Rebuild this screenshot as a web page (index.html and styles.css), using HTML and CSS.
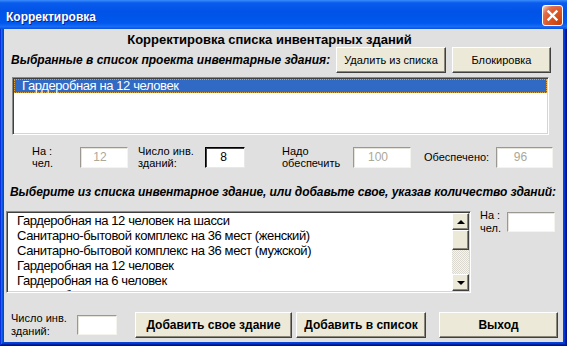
FILE: index.html
```html
<!DOCTYPE html>
<html lang="ru">
<head>
    <meta charset="UTF-8">
    <meta name="viewport" content="width=device-width, initial-scale=1.0">
    <title>Корректировка</title>
    <link rel="stylesheet" href="styles.css">
</head>
<body>
    <div class="window">
        <div class="titlebar">
            <span class="title">Корректировка</span>
            <span class="close">
                <svg width="19" height="19" viewBox="0 0 19 19">
                    <path d="M5.5 5.5 L13.5 13.5 M13.5 5.5 L5.5 13.5" stroke="#fff" stroke-width="2.4" stroke-linecap="square" fill="none"/>
                </svg>
            </span>
        </div>

        <div class="client">
            <div class="caption">Корректировка списка инвентарных зданий</div>

            <div class="row-top">
                <div class="hint">Выбранные в список проекта инвентарные здания:</div>
                <button class="btn btn-del">Удалить из списка</button>
                <button class="btn btn-lock">Блокировка</button>
            </div>

            <div class="listbox list-selected">
                <div class="item selected">Гардеробная на 12 человек</div>
            </div>

            <div class="totals">
                <div class="lbl lbl-people">На :<br>чел.</div>
                <div class="field disabled f-people">12</div>
                <div class="lbl lbl-count">Число инв.<br>зданий:</div>
                <div class="field active f-count">8</div>
                <div class="lbl lbl-need">Надо<br>обеспечить</div>
                <div class="field disabled f-need">100</div>
                <div class="lbl lbl-done">Обеспечено:</div>
                <div class="field disabled f-done">96</div>
            </div>

            <div class="hint hint-pick">Выберите из списка инвентарное здание, или добавьте свое, указав количество зданий:</div>

            <div class="row-pick">
                <div class="listbox list-catalog">
                    <div class="items">
                        <div class="item">Гардеробная на 12 человек на шасси</div>
                        <div class="item">Санитарно-бытовой комплекс на 36 мест (женский)</div>
                        <div class="item">Санитарно-бытовой комплекс на 36 мест (мужской)</div>
                        <div class="item">Гардеробная на 12 человек</div>
                        <div class="item">Гардеробная на 6 человек</div>
                        <div class="item">Гардеробная на 6 человек на шасси</div>
                    </div>
                    <div class="scrollbar">
                        <div class="sb-btn"><span class="arrow-up"></span></div>
                        <div class="sb-thumb"></div>
                        <div class="sb-track"></div>
                        <div class="sb-btn"><span class="arrow-down"></span></div>
                    </div>
                </div>
                <div class="side">
                    <div class="lbl lbl-side">На :<br>чел.</div>
                    <div class="field f-side"></div>
                </div>
            </div>

            <div class="row-bottom">
                <div class="lbl lbl-new">Число инв.<br>зданий:</div>
                <div class="field f-new"></div>
                <button class="btn bold btn-own">Добавить свое здание</button>
                <button class="btn bold btn-add">Добавить в список</button>
                <button class="btn bold btn-exit">Выход</button>
            </div>
        </div>
    </div>
</body>
</html>
```

FILE: styles.css
```css
body {
    margin: 0;
    background: #fff;
    font-family: "Liberation Sans", Arial, sans-serif;
    color: #000;
}
.window {
    width: 567px;
    height: 346px;
    box-sizing: border-box;
    display: flex;
    flex-direction: column;
    background: #0842d6;
    box-shadow: inset -1px -1px #00138c, inset 1px 1px #0831d9,
                inset -2px -2px #001ea0, inset 2px 2px #166aee,
                inset -3px -3px #003bda, inset 3px 3px #0855dd;
}
.titlebar {
    height: 29px;
    flex: none;
    box-sizing: border-box;
    display: flex;
    align-items: flex-start;
    padding: 5px 4px 0 6px;
    background: linear-gradient(#3a8cfa 0%, #0a5cee 10%, #0053e6 40%, #0058ee 80%, #1a6cf5 92%, #0a50dc 100%);
}
.title {
    margin-top: 5px;
    font-size: 12px;
    line-height: 14px;
    font-weight: bold;
    color: #fff;
    text-shadow: 1px 1px #0f1f8c;
}
.close {
    margin-left: auto;
    width: 21px;
    height: 21px;
    box-sizing: border-box;
    border: 1px solid #fff;
    border-radius: 3px;
    background: radial-gradient(circle at 90% 90%, #c8420a 0%, #dc5a2a 55%, #e07050 75%, #f4b8a0 92%, #fff 100%);
    display: flex;
}
.client {
    flex: 1;
    margin: 0 4px 4px;
    background: #e0e0e0;
    display: flex;
    flex-direction: column;
}
.caption {
    margin-top: 3px;
    padding-right: 28px;
    line-height: 15px;
    font-size: 13px;
    font-weight: bold;
    text-align: center;
}
.row-top {
    display: flex;
    align-items: center;
    height: 26px;
    padding: 0 12px 0 7px;
}
.hint {
    flex: 1;
    font-size: 12px;
    font-weight: bold;
    font-style: italic;
    white-space: nowrap;
}
.btn {
    height: 26px;
    padding: 0;
    box-sizing: border-box;
    font-family: "Liberation Sans", Arial, sans-serif;
    font-size: 11px;
    color: #000;
    background: #ece9d8;
    border: 1px solid;
    border-color: #fff #404040 #404040 #fff;
    box-shadow: inset -1px -1px #8a877a;
}
.btn.bold {
    font-size: 12px;
    font-weight: bold;
}
.btn-del {
    width: 110px;
}
.btn-lock {
    width: 99px;
    margin-left: 6px;
}
.listbox {
    box-sizing: border-box;
    background: #fff;
    border: 1px solid;
    border-color: #8a8a8a #fff #fff #8a8a8a;
    box-shadow: inset 1px 1px #404040, inset -1px -1px #d8d6cc;
    padding: 1px;
}
.list-selected {
    margin: 4px 0 0 8px;
    width: 537px;
    height: 58px;
}
.item {
    font-size: 13px;
    line-height: 15px;
    letter-spacing: -0.4px;
    white-space: nowrap;
}
.item.selected {
    height: 14px;
    box-sizing: border-box;
    line-height: 12px;
    padding-left: 7px;
    color: #fff;
    background: #316ac5;
    border: 1px dotted #d8a040;
}
.totals {
    display: flex;
    align-items: center;
    height: 22px;
    margin-top: 11px;
    padding-left: 28px;
}
.lbl {
    font-size: 11px;
    line-height: 12px;
    white-space: nowrap;
}
.field {
    height: 21px;
    box-sizing: border-box;
    background: #fff;
    border: 1px solid;
    border-color: #9a9890 #f4f3ee #f4f3ee #9a9890;
    box-shadow: inset 1px 1px #e6e4da;
    font-size: 12px;
    line-height: 19px;
    text-align: center;
    padding-right: 8px;
}
.field.disabled {
    color: #aca899;
}
.field.active {
    border-color: #000 #e8e8e8 #e8e8e8 #000;
    box-shadow: inset 1px 1px #404040;
    padding-right: 3px;
}
.lbl-people { width: 48px; }
.f-people { width: 48px; }
.lbl-count { width: 67px; margin-left: 10px; }
.f-count { width: 40px; }
.lbl-need { width: 71px; margin-left: 37px; }
.f-need { width: 58px; }
.lbl-done { width: 72px; margin-left: 13px; }
.f-done { width: 57px; }
.hint-pick {
    flex: none;
    margin-top: 17px;
    line-height: 15px;
    padding-left: 6px;
    letter-spacing: -0.06px;
}
.row-pick {
    display: flex;
    align-items: flex-start;
    margin-top: 11px;
    padding-left: 2px;
}
.list-catalog {
    width: 465px;
    height: 82px;
    display: flex;
}
.items {
    flex: 1;
    overflow: hidden;
    padding-left: 9px;
}
.scrollbar {
    width: 17px;
    display: flex;
    flex-direction: column;
}
.sb-btn,
.sb-thumb {
    box-sizing: border-box;
    background: #ece9d8;
    border: 1px solid;
    border-color: #fff #404040 #404040 #fff;
    box-shadow: inset -1px -1px #8a877a;
}
.sb-btn {
    height: 17px;
    display: flex;
    align-items: center;
    justify-content: center;
}
.sb-thumb {
    height: 20px;
}
.sb-track {
    flex: 1;
    background: repeating-conic-gradient(#f6f5f0 0 25%, #dcdad0 0 50%) 0 0 / 2px 2px;
}
.arrow-up,
.arrow-down {
    width: 0;
    height: 0;
    border-left: 4px solid transparent;
    border-right: 4px solid transparent;
}
.arrow-up {
    border-bottom: 4px solid #000;
}
.arrow-down {
    border-top: 4px solid #000;
}
.side {
    display: flex;
    align-items: flex-start;
    margin-left: 9px;
}
.lbl-side {
    width: 27px;
    margin-top: -2px;
    line-height: 13px;
}
.f-side {
    width: 48px;
    height: 20px;
    margin-top: 1px;
}
.row-bottom {
    display: flex;
    align-items: center;
    height: 26px;
    margin-top: 19px;
    padding-left: 7px;
}
.lbl-new {
    width: 66px;
    line-height: 13px;
}
.f-new {
    width: 40px;
    height: 20px;
}
.btn-own {
    width: 157px;
    margin-left: 18px;
}
.btn-add {
    width: 130px;
    margin-left: 4px;
}
.btn-exit {
    width: 119px;
    margin-left: 13px;
}
```
